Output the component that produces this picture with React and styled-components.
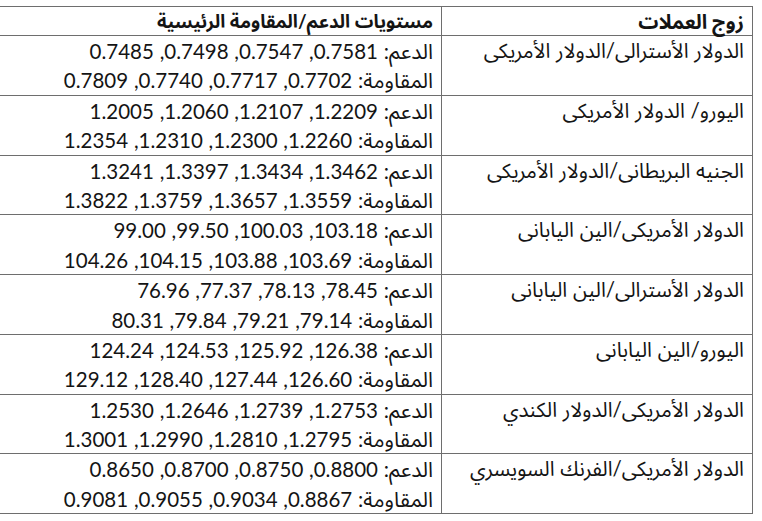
import React from "react";
import styled, { createGlobalStyle } from "styled-components";

const GlobalStyle = createGlobalStyle`
  html, body {
    margin: 0;
    padding: 0;
    background: #ffffff;
  }
  body {
    font-family: Lato, "Noto Sans Arabic", "DejaVu Sans", sans-serif;
    color: #141414;
  }
`;

const Page = styled.div`
  direction: rtl;
  height: 521px;
  overflow: hidden;
  padding: 6px 9px 0 6px;
  box-sizing: border-box;
`;

const Table = styled.table`
  width: 747px;
  border-collapse: collapse;
  table-layout: fixed;
  border: 1px solid #5a5a5a;
`;

const HeadCell = styled.th`
  width: ${(p) => p.$width}px;
  border: 1px solid #6e6e6e;
  padding: 0 8px;
  font-size: ${(p) => p.$size || 20}px;
  font-weight: 700;
  line-height: 28px;
  text-align: right;
  white-space: nowrap;
`;

const Cell = styled.td`
  border: 1px solid #6e6e6e;
  padding: 0 8px;
  font-size: 20.5px;
  line-height: 29.4px;
  text-align: right;
  vertical-align: top;
  white-space: nowrap;
`;

const Line = styled.div`
  height: 29.4px;
  word-spacing: 0.5px;
`;

const Label = styled.span`
  font-size: 21px;
`;

const Note = styled.div`
  padding: 3px 8px 0 0;
  font-size: 18px;
  line-height: 22px;
  color: #e8741e;
`;

const rows = [
  {
    pair: "الدولار الأسترالى/الدولار الأمريكى",
    support: "0.7581, 0.7547, 0.7498, 0.7485",
    resistance: "0.7702, 0.7717, 0.7740, 0.7809",
  },
  {
    pair: "اليورو/ الدولار الأمريكى",
    support: "1.2209, 1.2107, 1.2060, 1.2005",
    resistance: "1.2260, 1.2300, 1.2310, 1.2354",
  },
  {
    pair: "الجنيه البريطانى/الدولار الأمريكى",
    support: "1.3462, 1.3434, 1.3397, 1.3241",
    resistance: "1.3559, 1.3657, 1.3759, 1.3822",
  },
  {
    pair: "الدولار الأمريكى/الين اليابانى",
    support: "103.18, 100.03, 99.50, 99.00",
    resistance: "103.69, 103.88, 104.15, 104.26",
  },
  {
    pair: "الدولار الأسترالى/الين اليابانى",
    support: "78.45, 78.13, 77.37, 76.96",
    resistance: "79.14, 79.21, 79.84, 80.31",
  },
  {
    pair: "اليورو/الين اليابانى",
    support: "126.38, 125.92, 124.53, 124.24",
    resistance: "126.60, 127.44, 128.40, 129.12",
  },
  {
    pair: "الدولار الأمريكى/الدولار الكندي",
    support: "1.2753, 1.2739, 1.2646, 1.2530",
    resistance: "1.2795, 1.2810, 1.2990, 1.3001",
  },
  {
    pair: "الدولار الأمريكى/الفرنك السويسري",
    support: "0.8800, 0.8750, 0.8700, 0.8650",
    resistance: "0.8867, 0.9034, 0.9055, 0.9081",
  },
];

export default function App() {
  return (
    <Page>
      <GlobalStyle />
      <Table>
        <thead>
          <tr>
            <HeadCell $width={294}>زوج العملات</HeadCell>
            <HeadCell $width={453} $size={18.5}>
              مستويات الدعم/المقاومة الرئيسية
            </HeadCell>
          </tr>
        </thead>
        <tbody>
          {rows.map((r) => (
            <tr key={r.pair}>
              <Cell>
                <Line>{r.pair}</Line>
              </Cell>
              <Cell>
                <Line>
                  <Label>الدعم:</Label> {r.support}
                </Line>
                <Line>
                  <Label>المقاومة:</Label> {r.resistance}
                </Line>
              </Cell>
            </tr>
          ))}
        </tbody>
      </Table>
      <Note>المصدر: تحليلات السوق اليومية</Note>
    </Page>
  );
}
